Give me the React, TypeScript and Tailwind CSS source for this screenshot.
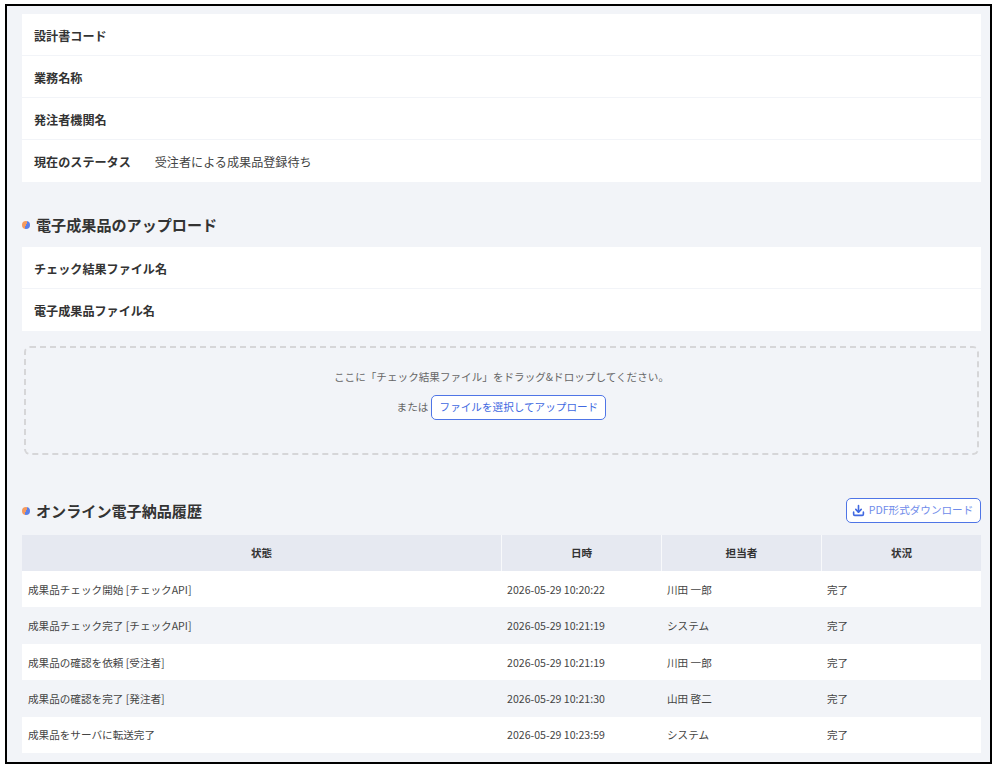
import { Download } from "lucide-react";

const font = "font-['Noto_Sans_CJK_JP','Noto_Sans',sans-serif]";

const history = [
  ["成果品チェック開始 [チェックAPI]", "2026-05-29 10:20:22", "川田 一郎", "完了"],
  ["成果品チェック完了 [チェックAPI]", "2026-05-29 10:21:19", "システム", "完了"],
  ["成果品の確認を依頼 [受注者]", "2026-05-29 10:21:19", "川田 一郎", "完了"],
  ["成果品の確認を完了 [発注者]", "2026-05-29 10:21:30", "山田 啓二", "完了"],
  ["成果品をサーバに転送完了", "2026-05-29 10:23:59", "システム", "完了"],
];

function InfoRow({ label, value, last }: { label: string; value?: string; last?: boolean }) {
  return (
    <div className={`flex h-[42px] items-center pl-3 ${last ? "pt-[2px]" : "border-b border-[#f2f4f8] pt-[3px]"}`}>
      <span className="text-[12.1px] font-bold text-[#333333]">{label}</span>
      {value && <span className="ml-6 text-[12.1px] text-[#444444]">{value}</span>}
    </div>
  );
}

function Heading({ children }: { children: string }) {
  return (
    <div className="flex items-center gap-[6px]">
      <span className="h-2 w-2 rounded-full bg-[linear-gradient(110deg,#f59a5f_50%,#5b7fe8_50%)]" />
      <h2 className="pb-[2px] text-[15.1px] leading-[22px] font-bold text-[#333333]">{children}</h2>
    </div>
  );
}

export default function App() {
  return (
    <div className={`h-[768px] w-[999px] bg-white pt-1 pl-[5px] ${font}`}>
      <div className="h-[760px] w-[987px] border-2 border-black bg-[#f2f4f8] pt-2 pr-[9px] pl-[15px]">
        {/* 基本情報 */}
        <section className="bg-white">
          <InfoRow label="設計書コード" />
          <InfoRow label="業務名称" />
          <InfoRow label="発注者機関名" />
          <InfoRow label="現在のステータス" value="受注者による成果品登録待ち" last />
        </section>

        {/* アップロード */}
        <section className="mt-[31px]">
          <Heading>電子成果品のアップロード</Heading>
          <div className="mt-[10px] bg-white">
            <InfoRow label="チェック結果ファイル名" />
            <InfoRow label="電子成果品ファイル名" last />
          </div>
          <div className="mx-[2px] mt-[15px] flex h-[109px] flex-col items-center rounded-md border-2 border-dashed border-[#d6d6d8] pt-5">
            <p className="text-[10.6px] leading-[18px] text-[#666666]">
              ここに「チェック結果ファイル」をドラッグ&ドロップしてください。
            </p>
            <div className="mt-[9px] flex items-center gap-[3px]">
              <span className="pb-px text-[10.6px] text-[#666666]">または</span>
              <button className="h-[25px] w-[175px] rounded-[5px] border border-[#4f75e6] bg-white pb-px text-[10.6px] text-[#4169e1]">
                ファイルを選択してアップロード
              </button>
            </div>
          </div>
        </section>

        {/* 履歴 */}
        <section className="mt-[43px]">
          <div className="flex items-center justify-between">
            <Heading>オンライン電子納品履歴</Heading>
            <button className="flex h-[25px] w-[135px] items-center justify-center gap-1 rounded-[5px] border border-[#4f75e6] bg-white pr-[2px] pb-px text-[10.6px] text-[#6f8bea]">
              <Download size={13} strokeWidth={3} className="text-[#4169e1]" />
              PDF形式ダウンロード
            </button>
          </div>
          <table className="mt-3 w-[959px] table-fixed border-separate border-spacing-0 text-[10.6px] text-[#444444]">
            <colgroup>
              <col className="w-[480px]" />
              <col className="w-[160px]" />
              <col className="w-[160px]" />
              <col className="w-[159px]" />
            </colgroup>
            <thead>
              <tr className="h-9 bg-[#e6e9f1] font-bold text-[#333333]">
                <th className="border-r border-[#f8f9fb]">状態</th>
                <th className="border-r border-[#f8f9fb]">日時</th>
                <th className="border-r border-[#f8f9fb]">担当者</th>
                <th>状況</th>
              </tr>
            </thead>
            <tbody>
              {history.map((row, i) => (
                <tr key={i} className={`h-[36.4px] ${i % 2 === 0 ? "bg-white" : "bg-[#f2f4f8]"}`}>
                  {row.map((cell, j) => (
                    <td key={j} className={`pt-px pr-[6px] ${j === 0 ? "pl-[6px]" : "pl-[5px]"}`}>
                      {cell}
                    </td>
                  ))}
                </tr>
              ))}
            </tbody>
          </table>
        </section>
      </div>
    </div>
  );
}
